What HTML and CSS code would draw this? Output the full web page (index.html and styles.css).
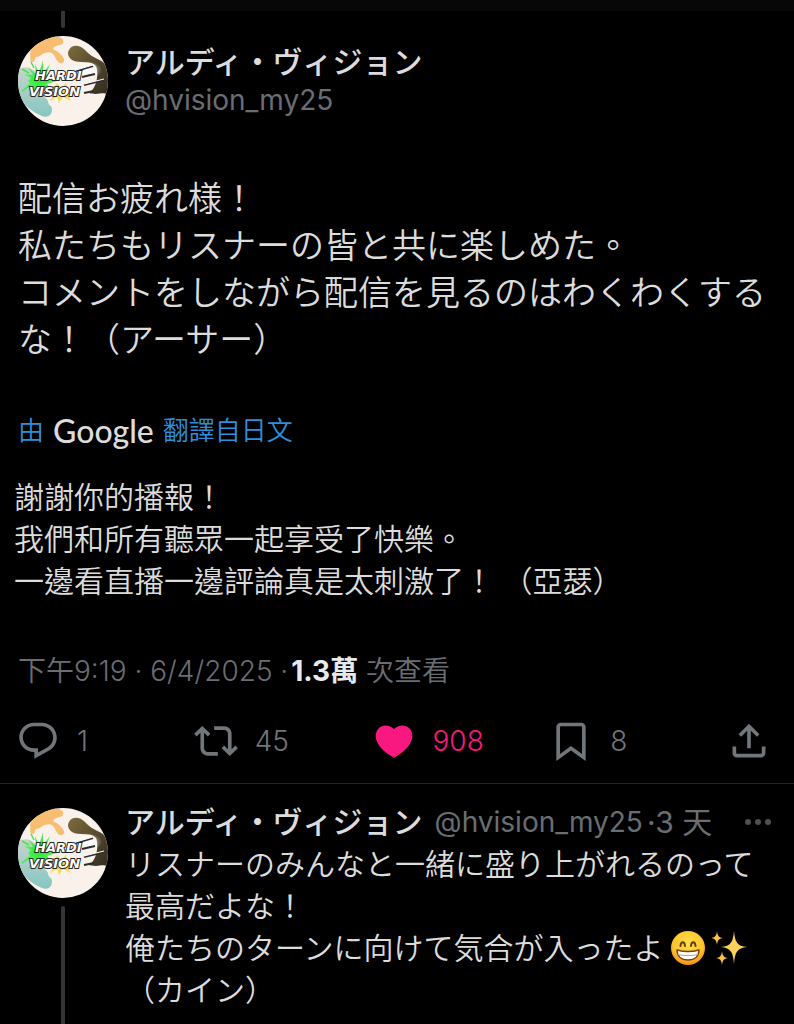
FILE: index.html
```html
<!DOCTYPE html>
<html lang="zh-Hant">

<head>
    <meta charset="UTF-8">
    <title>アルディ・ヴィジョン</title>
    <meta name="viewport" content="width=device-width, initial-scale=1.0">
    <link rel="stylesheet" href="styles.css">
</head>

<body>
    <!-- shared drawings -->
    <svg class="defs" aria-hidden="true">
        <defs>
            <linearGradient id="olive" x1="0" y1="0" x2="1" y2="1">
                <stop offset="0" stop-color="#7d6c3c"/>
                <stop offset="1" stop-color="#2b271f"/>
            </linearGradient>
            <linearGradient id="teal" x1="0" y1="0" x2="0" y2="1">
                <stop offset="0" stop-color="#c9d3cd"/>
                <stop offset="1" stop-color="#85c7c1"/>
            </linearGradient>
            <radialGradient id="burst">
                <stop offset="0" stop-color="#15f020"/>
                <stop offset="1" stop-color="#63f268"/>
            </radialGradient>
            <radialGradient id="shine">
                <stop offset="0" stop-color="#fff"/>
                <stop offset="1" stop-color="#fff" stop-opacity="0"/>
            </radialGradient>
            <clipPath id="round"><circle cx="45" cy="45" r="45"/></clipPath>
        </defs>
        <symbol id="avatar" viewBox="0 0 90 90">
            <g clip-path="url(#round)">
                <rect width="90" height="90" fill="#f9f1ea"/>
                <path fill="#f7bd70" d="M12 17C16 4 29-2 41 1c6 2 5 7 1 8-5 1-8 3-6 5 4 1 8 5 10 9 1 5-5 6-8 0-2-5-5-8-11-6-4 1-5 4-9 4-2 1 0 5-4 5-3 0-1-6-2-9z"/>
                <path fill="url(#teal)" d="M-2 35c7-6 14-4 20 1l3 19c1 5 8 6 9 10 0 5 4 4 4 8 0 7-5 9-10 7-7-3-15-6-28-26z"/>
                <path fill="url(#olive)" d="M51 14c3-6 11-5 16 0 5 6 11 8 18 12l9 12-1 22c-8-6-11 0-22-3 8-5 10-20 7-27-4-6-17-2-24-6-4-3-5-7-3-10z"/>
                <ellipse cx="68" cy="34" rx="16" ry="9" fill="url(#shine)"/>
                <path fill="url(#burst)" d="M10 45l3-3-7-4 9 1-5-8 8 7-1-10 4 9 4-13v13l7-9-4 11 9-3-7 7 9 2-10 3 5 7-9-5-2 9-4-8-7 8 3-10-10 4 7-6z"/>
                <path stroke="#4be453" stroke-width="1.5" d="M13 49L4 55M17 51l-6 9M11 37L4 33M16 32l-3-6"/>
                <path fill="#f4dd54" d="M34 56l5-9 5 6 4-7 1 9 8 0-7 4 3 6-8-4-4 6-2-6-7 4 3-6z"/>
                <path fill="none" stroke="#2d2d2d" stroke-width="2" d="M58 35l17-5M64 41l13-3M66 49l20-5M66 57l10-2"/>
                <path fill="none" stroke="#fff" stroke-width="1" d="M58 34l17-5M66 48l20-5"/>
            </g>
        </symbol>
    </svg>

    <div class="statusbar"></div>

    <main class="thread">
        <article class="post">
            <div class="thread-line thread-line-top"></div>
            <header class="author">
                <svg class="avatar" viewBox="0 0 90 90" role="img" aria-label="HARDI VISION">
                    <use href="#avatar"/>
                    <text x="17" y="44">HARDI</text>
                    <text x="11" y="60">VISION</text>
                </svg>
                <div class="author-info">
                    <strong class="name">アルディ・ヴィジョン</strong>
                    <a class="handle" href="#">@hvision_my25</a>
                </div>
            </header>

            <p class="text text-large">配信お疲れ様！<br>私たちもリスナーの皆と共に楽しめた。<br>コメントをしながら配信を見るのはわくわくするな！（アーサー）</p>

            <a class="translated-by" href="#">由 <span class="google">Google</span> 翻譯自日文</a>

            <p class="text translation">謝謝你的播報！<br>我們和所有聽眾一起享受了快樂。<br>一邊看直播一邊評論真是太刺激了！ （亞瑟）</p>

            <p class="meta">下午9:19 · 6/4/2025 ·<strong>1.3萬</strong> 次查看</p>

            <div class="actions">
                <button type="button" class="action" aria-label="回覆">
                    <svg class="icon" viewBox="0 0 24 24"><path d="M1.751 10c0-4.42 3.584-8 8.005-8h4.366c4.49 0 8.129 3.64 8.129 8.13 0 2.96-1.607 5.68-4.196 7.11l-8.054 4.46v-3.69h-.067c-4.49.1-8.183-3.51-8.183-8.01zm8.005-6c-3.317 0-6.005 2.69-6.005 6 0 3.37 2.77 6.08 6.138 6.01l.351-.01h1.761v2.3l5.087-2.81c1.951-1.08 3.163-3.13 3.163-5.36 0-3.39-2.744-6.13-6.129-6.13H9.756z"/></svg>
                    <span>1</span>
                </button>
                <button type="button" class="action" aria-label="轉發">
                    <svg class="icon" viewBox="0 0 24 24"><path d="M4.5 3.88l4.432 4.14-1.364 1.46L5.5 7.55V16c0 1.1.896 2 2 2H13v2H7.5c-2.209 0-4-1.79-4-4V7.55L1.432 9.48.068 8.02 4.5 3.88zM16.5 6H11V4h5.5c2.209 0 4 1.79 4 4v8.45l2.068-1.93 1.364 1.46-4.432 4.14-4.432-4.14 1.364-1.46 2.068 1.93V8c0-1.1-.896-2-2-2z"/></svg>
                    <span>45</span>
                </button>
                <button type="button" class="action liked" aria-label="喜歡">
                    <svg class="icon" viewBox="0 0 24 24"><path d="M20.884 13.19c-1.351 2.48-4.001 5.12-8.379 7.67l-.503.3-.504-.3c-4.379-2.55-7.029-5.19-8.382-7.67-1.36-2.5-1.41-4.86-.514-6.67.887-1.79 2.647-2.91 4.601-3.01 1.651-.09 3.368.56 4.798 2.01 1.429-1.45 3.146-2.1 4.796-2.01 1.954.1 3.714 1.22 4.601 3.01.896 1.81.846 4.17-.514 6.67z"/></svg>
                    <span>908</span>
                </button>
                <button type="button" class="action" aria-label="書籤">
                    <svg class="icon" viewBox="0 0 24 24"><path d="M4 4.5C4 3.12 5.119 2 6.5 2h11C18.881 2 20 3.12 20 4.5v18.44l-8-5.71-8 5.71V4.5zM6.5 4c-.276 0-.5.22-.5.5v14.56l6-4.29 6 4.29V4.5c0-.28-.224-.5-.5-.5h-11z"/></svg>
                    <span>8</span>
                </button>
                <button type="button" class="action" aria-label="分享">
                    <svg class="icon" viewBox="0 0 24 24"><path d="M12 2.59l5.7 5.7-1.41 1.42L13 6.41V16h-2V6.41l-3.3 3.3-1.41-1.42L12 2.59zM21 15l-.02 3.51c0 1.38-1.12 2.49-2.5 2.49H5.5C4.11 21 3 19.88 3 18.5V15h2v3.5c0 .28.22.5.5.5h12.98c.28 0 .5-.22.5-.5L19 15h2z"/></svg>
                </button>
            </div>
        </article>

        <article class="reply">
            <div class="reply-side">
                <svg class="avatar" viewBox="0 0 90 90" role="img" aria-label="HARDI VISION">
                    <use href="#avatar"/>
                    <text x="17" y="44">HARDI</text>
                    <text x="11" y="60">VISION</text>
                </svg>
                <div class="thread-line thread-line-down"></div>
            </div>
            <div class="reply-main">
                <header class="reply-header">
                    <strong class="name">アルディ・ヴィジョン</strong>
                    <a class="handle" href="#">@hvision_my25</a>
                    <span class="age">·3 天</span>
                    <button type="button" class="more" aria-label="更多">
                        <svg viewBox="0 0 28 8"><circle cx="4" cy="4" r="3"/><circle cx="14" cy="4" r="3"/><circle cx="24" cy="4" r="3"/></svg>
                    </button>
                </header>
                <p class="text">リスナーのみんなと一緒に盛り上がれるのって最高だよな！<br>俺たちのターンに向けて気合が入ったよ<svg class="emoji" viewBox="0 0 36 36" role="img" aria-label="😁">
                        <defs>
                            <radialGradient id="face" cx=".5" cy=".35" r=".65">
                                <stop offset="0" stop-color="#ffe04a"/>
                                <stop offset=".7" stop-color="#fcc22c"/>
                                <stop offset="1" stop-color="#ee8f16"/>
                            </radialGradient>
                        </defs>
                        <circle cx="18" cy="18" r="17" fill="url(#face)"/>
                        <path fill="none" stroke="#6b3d0c" stroke-width="2" stroke-linecap="round" d="M10.5 16c.3-5 4.2-5 4.5 0M21 16c.3-5 4.2-5 4.5 0"/>
                        <path fill="#fff" stroke="#7a430d" stroke-width="1.5" stroke-linejoin="round" d="M7 20c7 2 15 2 22 0 0 6-4 10-11 10S7 26 7 20z"/>
                        <path fill="none" stroke="#b9a58a" stroke-width="1" d="M8 24.5c6 1.5 14 1.5 20 0"/>
                    </svg><svg class="emoji sparkles" viewBox="0 0 36 36" role="img" aria-label="✨">
                        <path fill="#fcd25a" d="M22 1c1 11 3 15 13 16-10 1-12 5-13 17-1-12-3-16-13-17 10-1 12-5 13-16z"/>
                        <path fill="#fcc04a" d="M5 1c.6 5 2 6.5 6 7-4 .6-5.4 2-6 7-.6-5-2-6.4-6-7 4-.5 5.4-2 6-7zM10 21c.6 5 2 6.5 6 7-4 .6-5.4 2-6 7-.6-5-2-6.4-6-7 4-.5 5.4-2 6-7z"/>
                    </svg><br>（カイン）</p>
            </div>
        </article>
    </main>
</body>

</html>
```
FILE: styles.css
```css
* {
    box-sizing: border-box;
}

body {
    margin: 0;
    min-height: 100vh;
    display: flex;
    flex-direction: column;
    background-color: #000;
    color: #dcdcdc;
    font-family: Inter, "Noto Sans CJK TC", sans-serif;
    font-size: 28px;
}

p {
    margin: 0;
}

a {
    color: inherit;
    text-decoration: none;
}

button {
    padding: 0;
    border: none;
    background: none;
    color: inherit;
    font: inherit;
    cursor: pointer;
}

.defs {
    position: absolute;
    width: 0;
    height: 0;
}

.statusbar {
    height: 11px;
    background-color: #070707;
}

.thread {
    flex: 1;
    display: flex;
    flex-direction: column;
}

/* main post */
.post {
    padding: 0 18px 20px;
    border-bottom: 1px solid #202327;
}

.thread-line {
    width: 4px;
    background-color: #333639;
}

.thread-line-top {
    height: 17px;
    margin: 0 0 8px 43px;
    border-radius: 0 0 2px 2px;
}

.author {
    display: flex;
    align-items: center;
    gap: 17px;
}

.avatar {
    display: block;
    flex: none;
    width: 90px;
    height: 90px;
}

.avatar text {
    fill: #fff;
    stroke: #222;
    stroke-width: 2px;
    paint-order: stroke;
    font-family: "DejaVu Sans", sans-serif;
    font-size: 13px;
    font-style: italic;
    font-weight: bold;
}

.author-info {
    display: flex;
    flex-direction: column;
    line-height: 38px;
}

.name {
    font-size: 30px;
    font-weight: 500;
}

.handle,
.age {
    color: #6a6e73;
}

.text {
    font-size: 30px;
    font-weight: 350;
    line-height: 42px;
}

.text-large {
    margin-top: 49px;
    font-size: 34px;
    line-height: 47px;
}

.translated-by {
    display: flex;
    align-items: center;
    gap: 9px;
    margin-top: 48px;
    color: #2f8fdc;
    font-size: 26px;
    font-weight: 350;
    line-height: 40px;
}

.google {
    color: #dcdcdc;
    font-family: Lato, sans-serif;
    font-size: 32px;
    font-weight: 500;
}

.translation {
    margin: 25px 0 0 -4px;
}

.meta {
    margin-top: 54px;
    color: #6a6e73;
    font-weight: 350;
    line-height: 30px;
}

.meta strong {
    margin-left: 3px;
    color: #e7e9ea;
    font-weight: bold;
}

.actions {
    display: grid;
    grid-template-columns: repeat(4, 1fr) auto;
    margin: 33px 5px 0 -2px;
    color: #71767b;
}

.action {
    display: flex;
    align-items: center;
    gap: 17px;
    font-weight: 350;
}

.icon {
    width: 44px;
    height: 44px;
    fill: currentColor;
}

.liked {
    color: #f91880;
}

/* reply below */
.reply {
    flex: 1;
    display: flex;
    gap: 17px;
    padding: 17px 18px 0;
}

.reply-side {
    display: flex;
    flex-direction: column;
    align-items: center;
    padding-top: 7px;
}

.thread-line-down {
    flex: 1;
    margin-top: 8px;
    border-radius: 2px 2px 0 0;
}

.reply-main {
    flex: 1;
}

.reply-header {
    display: flex;
    align-items: center;
    line-height: 42px;
}

.reply-header .handle {
    margin-left: 12px;
}

.age {
    margin-left: 4px;
    font-size: 30px;
}

.more {
    display: flex;
    margin: 0 4px 0 auto;
}

.more svg {
    width: 28px;
    height: 8px;
    fill: #4d5054;
}

.emoji {
    width: 36px;
    height: 36px;
    margin-left: 6px;
    vertical-align: -7px;
}
```
